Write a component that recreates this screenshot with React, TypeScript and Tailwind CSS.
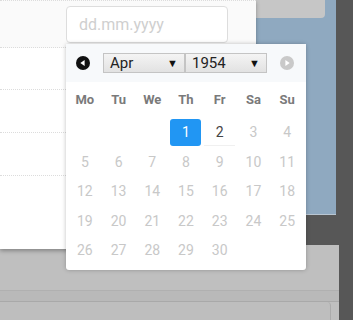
import React from "react";

const dayNames = ["Mo", "Tu", "We", "Th", "Fr", "Sa", "Su"];

// April 1954 starts on a Thursday
const cells: (number | null)[] = [null, null, null, ...Array.from({ length: 30 }, (_, i) => i + 1)];

function ArrowIcon({ dir, color }: { dir: "left" | "right"; color: string }) {
  return (
    <svg width="14" height="14" viewBox="0 0 14 14">
      <circle cx="7" cy="7" r="7" fill={color} />
      {dir === "left" ? (
        <path d="M4.3 7 L8.6 4 L8.6 10 Z" fill="#fff" />
      ) : (
        <path d="M9.7 7 L5.4 4 L5.4 10 Z" fill="#fff" />
      )}
    </svg>
  );
}

function Select({ value }: { value: string }) {
  return (
    <div className="flex h-[20px] w-[82px] items-center justify-between border border-[#c4c4c4] bg-gradient-to-b from-[#f4f4f4] to-[#e2e2e2] pl-[6px] pr-[6px] text-[15px] leading-none text-[#222]">
      <span>{value}</span>
      <span className="text-[11px] text-[#111]">▼</span>
    </div>
  );
}

export default function App() {
  return (
    <div className="relative h-[320px] w-[353px] overflow-hidden bg-[#575757] font-['Roboto','Liberation_Sans',sans-serif]">
      {/* background app */}
      <div className="flex h-full flex-col">
        <div className="h-[215px] w-[336px] border-b border-[#b9c6d2] bg-[#8fa9c0]">
          <div className="ml-[256px] h-[18px] w-[69px] rounded-br-[4px] bg-[#c6c6c6]" />
        </div>
        <div className="h-[30px]" />
        <div className="flex h-[75px] w-[339px] flex-col bg-[#bfbfbf]">
          <div className="h-[46px] border-b border-[#b0b0b0]" />
          <div className="h-[11px] border-b border-[#a9a9a9] bg-[#b9b9b9]" />
          <div className="mr-[8px] flex-1 rounded-tr-[4px] border-r border-[#ababab] bg-[#bebebe]" />
        </div>
      </div>

      {/* modal */}
      <div className="absolute left-0 top-0 flex h-[249px] w-[256px] flex-col bg-white shadow-[0_2px_4px_rgba(0,0,0,0.3)]">
        <div className="h-[48px] border-t border-b border-dotted border-[#dcdcdc] bg-[#fafafa]" />
        <div className="h-[42px] border-b border-dotted border-[#dcdcdc]" />
        <div className="h-[43px] border-b border-dotted border-[#dcdcdc]" />
        <div className="h-[43px] border-b border-dotted border-[#dcdcdc]" />
      </div>

      {/* date input */}
      <div className="absolute left-[66px] top-[6px] flex h-[37px] w-[162px] items-center rounded-[4px] border border-[#dddddd] bg-white pl-[12px] text-[16px] text-[#cfcfcf]">
        dd.mm.yyyy
      </div>

      {/* datepicker */}
      <div className="absolute left-[66px] top-[44px] h-[226px] w-[240px] rounded-[3px] bg-white shadow-[0_0_4px_rgba(0,0,0,0.25)]">
        <div className="flex h-[38px] items-center bg-[#f7f9fb] pl-[10px]">
          <ArrowIcon dir="left" color="#111" />
          <div className="ml-[13px] flex">
            <Select value="Apr" />
            <Select value="1954" />
          </div>
          <div className="ml-[13px]">
            <ArrowIcon dir="right" color="#c9c9c9" />
          </div>
        </div>
        <div className="grid grid-cols-7 px-[2px]">
          {dayNames.map((d) => (
            <div key={d} className="flex h-[35px] items-center justify-center text-[13px] font-bold text-[#7a7a7a]">
              {d}
            </div>
          ))}
          {cells.map((n, i) => (
            <div key={i} className="flex h-[29.5px] items-start justify-center pt-[2px]">
              {n === 1 ? (
                <div className="flex h-[27px] w-[31px] items-center justify-center rounded-[3px] bg-[#2196f3] text-[14px] text-white">
                  1
                </div>
              ) : n === 2 ? (
                <div className="flex h-[27px] w-[31px] items-center justify-center border-b border-[#f0f0f0] text-[14px] text-[#444]">
                  2
                </div>
              ) : n ? (
                <div className="flex h-[27px] w-[31px] items-center justify-center text-[14px] text-[#c8c8c8]">
                  {n}
                </div>
              ) : null}
            </div>
          ))}
        </div>
      </div>
    </div>
  );
}
